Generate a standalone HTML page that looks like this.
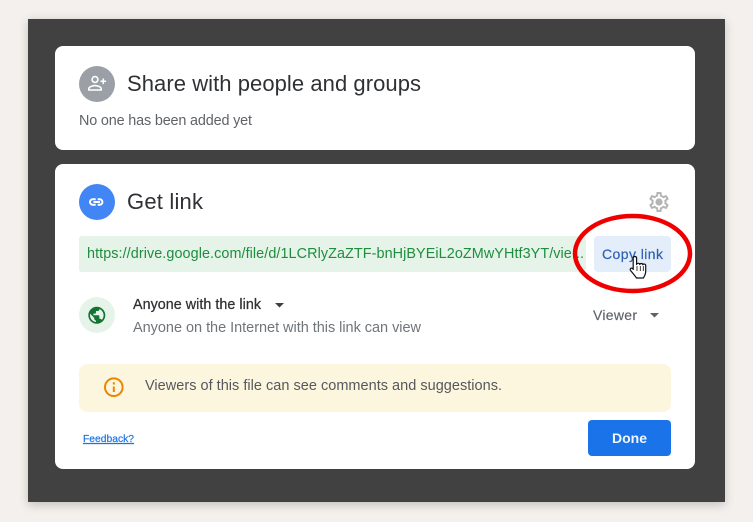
<!DOCTYPE html>
<html><head><meta charset="utf-8"><style>
html,body{margin:0;padding:0;width:753px;height:522px;overflow:hidden;background:#f4f0ed}
svg{display:block}
text{font-family:"Liberation Sans",sans-serif}
</style></head><body>
<svg width="753" height="522" viewBox="0 0 753 522" xmlns="http://www.w3.org/2000/svg">
<defs><filter id="s" x="-5%" y="-5%" width="110%" height="110%"><feGaussianBlur stdDeviation="5"/></filter></defs>
<rect x="28" y="21" width="697" height="484" fill="#000" opacity=".2" filter="url(#s)"/>
<rect x="28" y="19" width="697" height="483" fill="#414141"/>
<rect x="55" y="46" width="640" height="104" rx="8" fill="#fff"/>
<rect x="55" y="164" width="640" height="305" rx="8" fill="#fff"/>

<circle cx="97" cy="84" r="18" fill="#9aa0a6"/>
<g fill="none" stroke="#fff" stroke-width="1.600"><circle cx="95" cy="79.500" r="2.900"/><path d="M88.800 90v-1.200c0-2 3.800-3.200 6.200-3.200s6.200 1.200 6.200 3.200V90z"/><path d="M103.300 78.500v5.600M100.500 81.300h5.600" stroke-width="1.500"/></g>
<text x="127" y="91" font-size="22" fill="#2f3134" textLength="294">Share with people and groups</text>
<text x="79" y="125" font-size="14.400" fill="#5f6368" textLength="173">No one has been added yet</text>

<circle cx="97" cy="202" r="18" fill="#4285f4"/>
<g fill="none" stroke="#fff" stroke-width="2"><path d="M95.700 199.300h-3a2.700 2.700 0 0 0 0 5.400h3M97.700 199.300h2a2.700 2.700 0 0 1 0 5.400h-2M93.500 202h6.500"/></g>
<text x="127" y="209" font-size="22" fill="#2f3134" textLength="76">Get link</text>
<g transform="translate(647,190)"><path fill="#b5b5b5" d="M19.430 12.980c.04-.32.07-.64.07-.98 0-.34-.03-.66-.07-.98l2.110-1.650c.19-.15.24-.42.12-.64l-2-3.460c-.09-.16-.26-.25-.44-.25-.06 0-.12.01-.17.03l-2.490 1c-.52-.4-1.080-.73-1.690-.98l-.38-2.650C14.460 2.180 14.250 2 14 2h-4c-.25 0-.46.18-.49.42l-.38 2.650c-.61.25-1.170.59-1.690.98l-2.490-1c-.06-.02-.12-.03-.18-.03-.17 0-.34.09-.43.25l-2 3.460c-.13.22-.07.49.12.64l2.110 1.650c-.04.32-.07.65-.07.98 0 .33.03.66.07.98l-2.110 1.650c-.19.15-.24.42-.12.64l2 3.460c.09.16.26.25.44.25.06 0 .12-.01.17-.03l2.490-1c.52.4 1.080.73 1.690.98l.38 2.650c.03.24.24.42.49.42h4c.25 0 .46-.18.49-.42l.38-2.650c.61-.25 1.170-.59 1.690-.98l2.490 1c.06.02.12.03.18.03.17 0 .34-.09.43-.25l2-3.460c.12-.22.07-.49-.12-.64l-2.110-1.650zm-1.980-1.710c.04.31.05.52.05.73 0 .21-.02.43-.05.73l-.14 1.130.89.7 1.080.84-.7 1.210-1.270-.51-1.040-.42-.9.68c-.43.32-.84.56-1.250.73l-1.060.43-.16 1.130-.2 1.350h-1.400l-.19-1.350-.16-1.130-1.060-.43c-.43-.18-.83-.41-1.230-.71l-.91-.7-1.060.43-1.270.51-.7-1.210 1.080-.84.89-.7-.14-1.130c-.03-.31-.05-.54-.05-.74s.02-.43.05-.73l.14-1.130-.89-.7-1.080-.84.7-1.210 1.270.51 1.040.42.9-.68c.43-.32.84-.56 1.250-.73l1.060-.43.16-1.130.2-1.350h1.390l.19 1.350.16 1.130 1.060.43c.43.18.83.41 1.230.71l.91.7 1.060-.43 1.270-.51.7 1.210-1.070.85-.89.7.14 1.130z"/><circle cx="12" cy="12" r="3.600" fill="#b5b5b5"/></g>

<rect x="79" y="236" width="507" height="36" rx="3" fill="#e6f3e9"/>
<text x="87" y="258" font-size="14.400" fill="#1e8e3e" textLength="497">https://drive.google.com/file/d/1LCRlyZaZTF-bnHjBYEiL2oZMwYHtf3YT/vie...</text>
<rect x="594" y="236" width="77" height="36" rx="4" fill="#e3eefa"/>
<text x="602" y="259" font-size="14" fill="#2f5fb3" stroke="#2f5fb3" stroke-width=".2" textLength="61">Copy link</text>

<circle cx="97" cy="315" r="18" fill="#e6f3e9"/>
<g transform="translate(86.600,305.100) scale(.85)"><path fill="#137333" d="M12 2C6.480 2 2 6.480 2 12s4.480 10 10 10 10-4.480 10-10S17.520 2 12 2zm-1 17.930c-3.950-.49-7-3.850-7-7.930 0-.62.08-1.210.21-1.790L9 15v1c0 1.100.9 2 2 2v1.930zm6.900-2.540c-.26-.81-1-1.390-1.900-1.390h-1v-3c0-.55-.45-1-1-1H8v-2h2c.55 0 1-.45 1-1V7h2c1.100 0 2-.9 2-2v-.41c2.930 1.190 5 4.060 5 7.410 0 2.080-.8 3.970-2.100 5.390z"/></g>
<text x="133" y="309" font-size="14.300" fill="#2f3134" stroke="#2f3134" stroke-width=".25" textLength="128">Anyone with the link</text>
<path d="M275 303h9l-4.500 4.500z" fill="#3c4043"/>
<text x="133" y="332" font-size="14.500" fill="#70757a" textLength="288">Anyone on the Internet with this link can view</text>
<text x="593" y="320" font-size="14" fill="#5f6368" stroke="#5f6368" stroke-width=".15" textLength="44">Viewer</text>
<path d="M650 313h9l-4.500 4.500z" fill="#5f6368"/>

<rect x="79" y="364" width="592" height="48" rx="8" fill="#fdf6df"/>
<circle cx="113.800" cy="387.200" r="8.800" fill="none" stroke="#ea8600" stroke-width="2"/>
<path d="M113.800 386.500v5.500M113.800 382.200v2.300" stroke="#ea8600" stroke-width="2" fill="none"/>
<text x="145" y="390" font-size="14.500" fill="#55585c" textLength="357">Viewers of this file can see comments and suggestions.</text>

<text x="83" y="442" font-size="10.300" fill="#1a73e8" stroke="#1a73e8" stroke-width=".2" text-decoration="underline" textLength="51">Feedback?</text>
<rect x="588" y="420" width="83" height="36" rx="4" fill="#1a73e8"/>
<text x="612" y="443" font-size="14" font-weight="bold" fill="#f2f7fe" textLength="35">Done</text>

<ellipse cx="632.500" cy="253.500" rx="57.500" ry="37.500" fill="none" stroke="#ee0000" stroke-width="4.500"/>

<path d="M633.200 258.300c0-2.400 3.400-2.400 3.400 0v6.200c.2-1.500 3-1.600 3.200 0 .3-1.400 2.900-1.300 3 .3.500-1.200 2.900-1 2.900.8v5.600c0 3-1 4.500-2.300 6.800h-6.900c-1.500-2.300-4-5-5.900-7.500-1.100-1.500.5-3 1.900-2.100l.7 1z" fill="#fff" stroke="#111" stroke-width="1.200" stroke-linejoin="round"/>
<path d="M637 266v5M640.300 266v5M643.300 266v5" stroke="#111" stroke-width=".8"/>
</svg>
</body></html>
